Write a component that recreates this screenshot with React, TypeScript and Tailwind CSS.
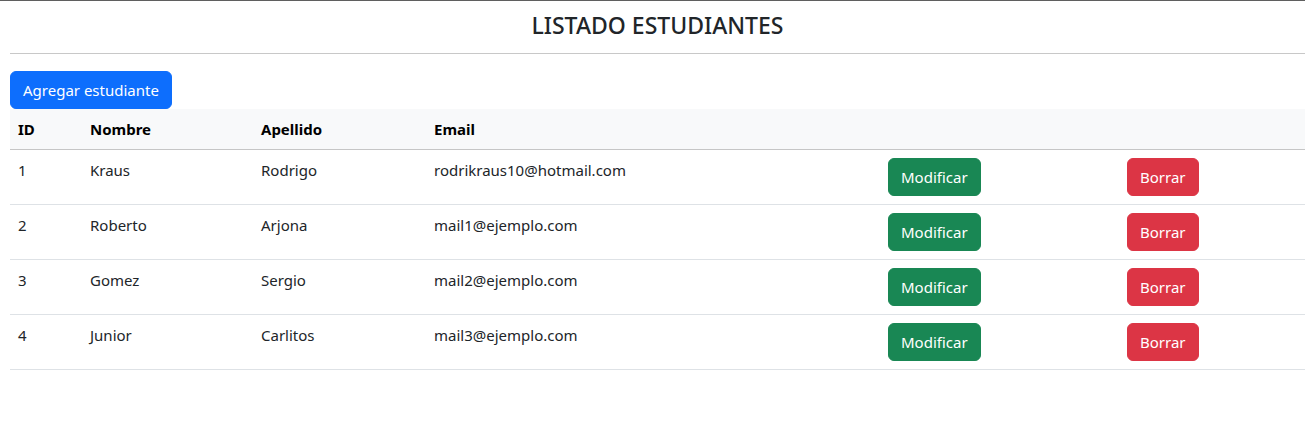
import React from "react";

const rows = [
  { id: 1, nombre: "Kraus", apellido: "Rodrigo", email: "rodrikraus10@hotmail.com" },
  { id: 2, nombre: "Roberto", apellido: "Arjona", email: "mail1@ejemplo.com" },
  { id: 3, nombre: "Gomez", apellido: "Sergio", email: "mail2@ejemplo.com" },
  { id: 4, nombre: "Junior", apellido: "Carlitos", email: "mail3@ejemplo.com" },
];

export default function App() {
  return (
    <div
      className="min-h-[441px] bg-white border-t border-[#5f5f5f] text-[#212529] text-[15px]"
      style={{ fontFamily: '"Noto Sans", "Open Sans", sans-serif' }}
    >
      <div className="pl-[10px]">
        <h3 className="pt-[8px] h-[40px] text-center text-[23px] leading-[32px] font-medium text-[#212529] mb-[12px]">
          LISTADO ESTUDIANTES
        </h3>
        <div className="h-px bg-[#c8c8c8]" />
        <button className="mt-[17px] h-[38px] px-3 rounded-md bg-[#0d6efd] text-white text-[15px] leading-6 border border-[#0d6efd]">
          Agregar estudiante
        </button>
        <table className="w-full table-fixed border-collapse">
          <colgroup>
            <col className="w-[72px]" />
            <col className="w-[171px]" />
            <col className="w-[173px]" />
            <col className="w-[454px]" />
            <col className="w-[239px]" />
            <col />
          </colgroup>
          <thead>
            <tr className="bg-[#f8f9fa] border-b border-[#c6c6c6]">
              <th className="text-left font-bold text-black px-2 py-2 leading-6">ID</th>
              <th className="text-left font-bold text-black px-2 py-2 leading-6">Nombre</th>
              <th className="text-left font-bold text-black px-2 py-2 leading-6">Apellido</th>
              <th className="text-left font-bold text-black px-2 py-2 leading-6">Email</th>
              <th className="px-2 py-2" />
              <th className="px-2 py-2" />
            </tr>
          </thead>
          <tbody>
            {rows.map((r) => (
              <tr key={r.id} className="border-b border-[#dee2e6]">
                <td className="align-top px-2 py-2 leading-6">{r.id}</td>
                <td className="align-top px-2 py-2 leading-6">{r.nombre}</td>
                <td className="align-top px-2 py-2 leading-6">{r.apellido}</td>
                <td className="align-top px-2 py-2 leading-6">{r.email}</td>
                <td className="align-top px-2 py-2">
                  <button className="h-[38px] px-3 rounded-md bg-[#198754] border border-[#198754] text-white text-[15px] leading-6">
                    Modificar
                  </button>
                </td>
                <td className="align-top px-2 py-2">
                  <button className="h-[38px] px-3 rounded-md bg-[#dc3545] border border-[#dc3545] text-white text-[15px] leading-6">
                    Borrar
                  </button>
                </td>
              </tr>
            ))}
          </tbody>
        </table>
      </div>
    </div>
  );
}
